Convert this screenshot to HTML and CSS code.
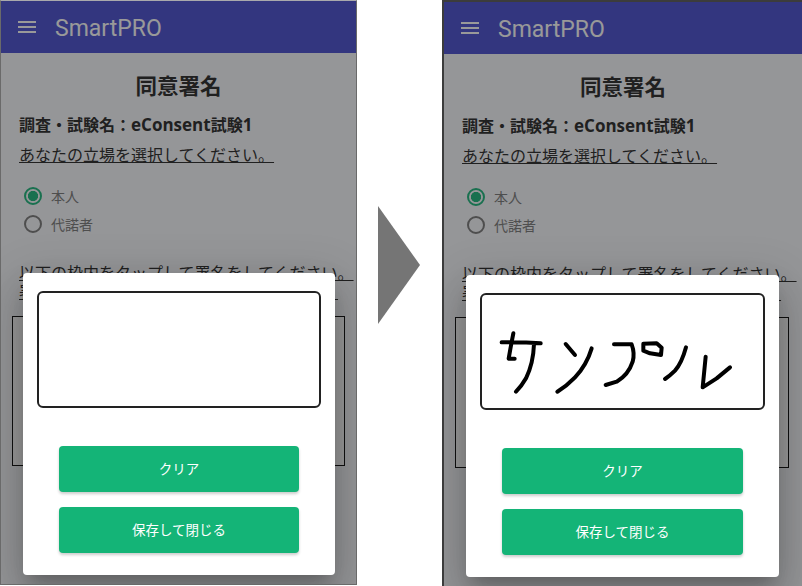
FILE: index.html
```html
<!DOCTYPE html>
<html lang="ja">
<head>
<meta charset="utf-8">
<title>同意署名</title>
<link rel="stylesheet" href="styles.css">
</head>
<body>
<main class="stage">
  <section class="phone phone-before">
    <header class="appbar">
      <svg class="menu" viewBox="0 0 18 12"><path d="M0 1h18M0 6h18M0 11h18"/></svg>
      <span class="brand">SmartPRO</span>
    </header>
    <div class="content">
      <h1>同意署名</h1>
      <p class="study">調査・試験名：<span class="latin">eConsent</span>試験<span class="latin">1</span></p>
      <p class="line">あなたの立場を選択してください。</p>
      <div class="radios">
        <div class="radio on"><i></i><span>本人</span></div>
        <div class="radio"><i></i><span>代諾者</span></div>
      </div>
      <p class="line instruct">以下の枠内をタップして署名をしてください。<br>署名後、保存ボタンをタップしてください。</p>
      <div class="sigframe"></div>
    </div>
    <div class="scrim"></div>
    <div class="dialog">
      <div class="pad"></div>
      <button class="btn first">クリア</button>
      <button class="btn">保存して閉じる</button>
    </div>
  </section>

  <svg class="arrow" viewBox="0 0 42 118"><polygon points="0,0 42,59 0,118"/></svg>

  <section class="phone phone-after">
    <header class="appbar">
      <svg class="menu" viewBox="0 0 18 12"><path d="M0 1h18M0 6h18M0 11h18"/></svg>
      <span class="brand">SmartPRO</span>
    </header>
    <div class="content">
      <h1>同意署名</h1>
      <p class="study">調査・試験名：<span class="latin">eConsent</span>試験<span class="latin">1</span></p>
      <p class="line">あなたの立場を選択してください。</p>
      <div class="radios">
        <div class="radio on"><i></i><span>本人</span></div>
        <div class="radio"><i></i><span>代諾者</span></div>
      </div>
      <p class="line instruct">以下の枠内をタップして署名をしてください。<br>署名後、保存ボタンをタップしてください。</p>
      <div class="sigframe"></div>
    </div>
    <div class="scrim"></div>
    <div class="dialog">
      <div class="pad">
        <svg class="ink" viewBox="0 0 840 300">
          <path d="M65 97Q120 95 182 100M100 70Q92 110 86 146L104 146M162 102Q160 160 138 205Q125 228 108 245"/>
          <path d="M257 102L285 135M335 115Q320 165 285 202Q260 228 232 245"/>
          <path d="M402 103L455 103Q465 130 458 155Q445 195 410 215L377 225"/>
          <path d="M490 101L530 100L545 113L543 135L510 130L490 122Z"/>
          <path d="M618 112Q605 160 585 182Q570 197 555 207"/>
          <path d="M677 140L668 232L710 205L750 172"/>
        </svg>
      </div>
      <button class="btn first">クリア</button>
      <button class="btn">保存して閉じる</button>
    </div>
  </section>
</main>
</body>
</html>
```
FILE: styles.css
```css
* { box-sizing: border-box; }
html, body { margin: 0; background: #fff; }
body { font-family: "Noto Sans CJK JP", "Roboto", sans-serif; }
.stage { display: flex; align-items: flex-start; width: 802px; height: 586px; overflow: hidden; }

.phone { position: relative; flex: none; overflow: hidden; background: #f8f9fd; }
.phone-before { width: 357px; height: 585px; border: 1px solid #6a6a6a; border-top-color: #a9a9ac; }
.phone-after { width: 360px; height: 586px; border: 2px solid #3c3c3c; border-right-width: 0; border-bottom-width: 0; margin-left: 22px; }
.arrow { flex: none; width: 42px; height: 118px; margin: 206px 0 0 21px; fill: #757575; }

.appbar { display: flex; align-items: center; height: 52px; background: #4349d0; padding-left: 17px; color: #fff; }
.menu { width: 18px; height: 12px; fill: none; stroke: #fff; stroke-width: 2; }
.brand { font: 400 23px/1 "Roboto", sans-serif; margin: 2px 0 0 19px; }

.content { padding: 0 18px; color: #212121; }
.content h1 { margin: 0; padding-top: 20px; font-size: 21.5px; line-height: 24px; font-weight: 700; text-align: center; }
.content p { margin: 0; white-space: nowrap; }
.content .study { height: 24px; font: 700 16px/24px "Noto Sans CJK JP", sans-serif; margin-top: 15px; }
.latin { font-family: "Open Sans", sans-serif; font-size: 17px; line-height: 1; }
.content .line { font-size: 16px; line-height: 24px; text-decoration: underline; margin-top: 6px; }

.radios { margin-top: 16px; padding-left: 5px; }
.radio { display: flex; align-items: center; height: 28px; font-size: 14px; color: #757575; }
.radio i { width: 18px; height: 18px; border: 2px solid #757575; border-radius: 50%; margin-right: 9px; }
.radio.on i { border-color: #14b477; background: radial-gradient(circle, #14b477 0 4.8px, transparent 5.4px); }

.content .instruct { margin-top: 25px; line-height: 19px; }
.sigframe { margin: 15px -7px 0 -7px; height: 150px; border: 1px solid #000; background: #fff; }
.phone-after .sigframe { margin-right: -5px; height: 151px; }

.scrim { position: absolute; inset: 0; background: rgba(33, 33, 33, .46); }

.dialog {
  position: absolute; left: 22px; top: 272px; width: 312px; height: 302px;
  background: #fff; border-radius: 4px; padding: 18px 14px 0;
  box-shadow: 0 11px 15px -7px rgba(0,0,0,.2), 0 24px 38px 3px rgba(0,0,0,.14), 0 9px 46px 8px rgba(0,0,0,.12);
}
.phone-after .dialog { top: 273px; width: 313px; }

.pad { position: relative; height: 117px; border: 2px solid #222; border-radius: 6px; background: #fff; margin-bottom: 38px; }
.ink { position: absolute; left: -2px; top: 15px; width: 280px; height: 100px; fill: none; stroke: #000; stroke-width: 12; stroke-linecap: round; stroke-linejoin: round; }

.btn {
  display: block; width: 240px; height: 46px; margin: 0 auto 15px; padding: 0 0 1px; border: 0; border-radius: 4px;
  background: #14b477; color: #fff; font: 400 13.5px/1 "Noto Sans CJK JP", sans-serif;
  box-shadow: 0 2px 3px rgba(0,0,0,.2);
}
.phone-after .btn { width: 241px; }
```
